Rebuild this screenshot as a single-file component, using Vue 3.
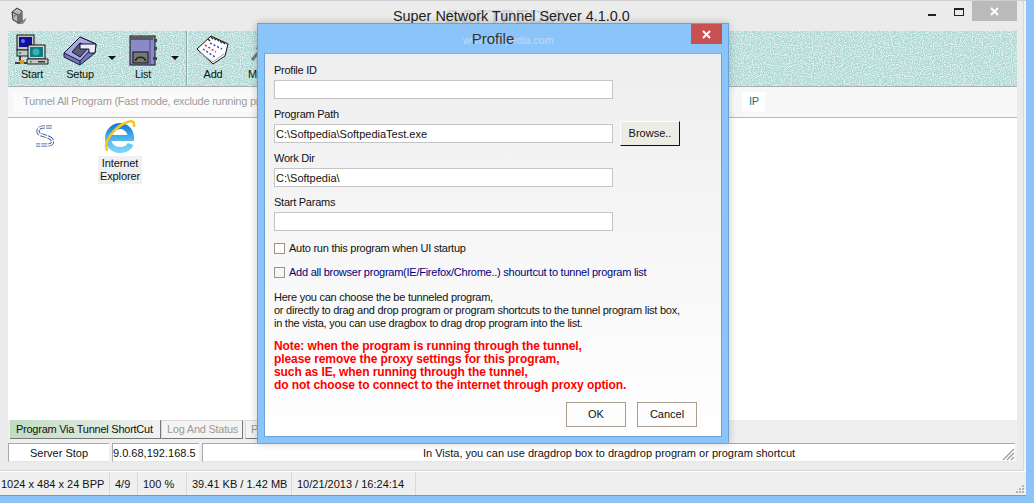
<script setup>
const fields = [
  { label: 'Profile ID', value: '' },
  { label: 'Program Path', value: 'C:\\Softpedia\\SoftpediaTest.exe', browse: true },
  { label: 'Work Dir', value: 'C:\\Softpedia\\' },
  { label: 'Start Params', value: '' },
]
const help = [
  'Here you can choose the be tunneled program,',
  'or directly to drag and drop program or program shortcuts to the tunnel program list box,',
  'in the vista, you can use dragbox to drag drop program into the list.',
]
const note = [
  'Note: when the program is running through the tunnel,',
  'please remove the proxy settings for this program,',
  'such as IE, when running through the tunnel,',
  'do not choose to connect to the internet through proxy option.',
]
</script>

<template>
  <div class="screen">
    <div class="win">
      <div class="frame">
        <header class="titlebar">
          <svg class="appicon" width="16" height="18" viewBox="0 0 16 18">
            <path d="M11 14l4-3v2l-3 4H5z" fill="#8c8c8c" />
            <path d="M1 5l5-4 5 3v10l-3 2-6-3z" fill="#b9b9b9" stroke="#333" stroke-width="1" />
            <path d="M1 5l6 3v8" fill="none" stroke="#333" stroke-width="1" />
            <path d="M7 8l4-3.600V14l-3 2z" fill="#6f6f6f" />
            <rect x="3" y="8" width="1.500" height="1.500" fill="#a040a0" />
          </svg>
          <span class="wm wm-big">SOFTPEDIA</span>
          <span class="title">Super Network Tunnel Server 4.1.0.0</span>
          <div class="controls">
            <i class="min"></i>
            <i class="max"></i>
            <span class="close">
              <svg width="9" height="9" viewBox="0 0 9 9"><path d="M1 1l7 7M8 1l-7 7" stroke="#fff" stroke-width="2" /></svg>
            </span>
          </div>
        </header>

        <div class="body">
          <div class="toolbar">
            <svg class="grain" width="100%" height="100%">
              <filter id="noise" x="0" y="0" width="100%" height="100%" color-interpolation-filters="sRGB">
                <feTurbulence type="fractalNoise" baseFrequency="1" numOctaves="1" seed="4" />
                <feColorMatrix values="0 0 0 0 0.55  0 0 0 0 0.78  0 0 0 0 0.76  5 0 0 0 -2.1" />
              </filter>
              <filter id="noise2" x="0" y="0" width="100%" height="100%" color-interpolation-filters="sRGB">
                <feTurbulence type="fractalNoise" baseFrequency="0.9" numOctaves="1" seed="11" />
                <feColorMatrix values="0 0 0 0 0.88  0 0 0 0 0.95  0 0 0 0 0.94  5 0 0 0 -2.2" />
              </filter>
              <rect width="100%" height="100%" filter="url(#noise)" />
              <rect width="100%" height="100%" filter="url(#noise2)" />
            </svg>

            <div class="tool">
              <svg width="34" height="32" viewBox="0 0 34 32">
                <rect x="2" y="1" width="17" height="15" fill="#c6c6c6" stroke="#111" />
                <rect x="4" y="3" width="13" height="10" fill="#10109a" />
                <circle cx="8" cy="7" r="2" fill="#6a6aff" />
                <rect x="2" y="16" width="14" height="6" fill="#c6c6c6" stroke="#222" />
                <rect x="4" y="18" width="2" height="2" fill="#1faa4a" />
                <path d="M5 22v5M0 29h12" stroke="#111" stroke-width="1.500" />
                <rect x="5" y="26" width="4" height="4" fill="#e8921a" />
                <rect x="13" y="11" width="17" height="14" fill="#d4d4d4" stroke="#111" />
                <rect x="15" y="13" width="13" height="10" fill="#0c7c86" />
                <circle cx="21" cy="18" r="3.500" fill="#38b0b0" />
                <path d="M12 25h18l3 0v5H12z" fill="#c6c6c6" stroke="#222" />
                <rect x="15" y="27" width="2" height="1.500" fill="#1faa4a" />
                <rect x="23" y="27" width="7" height="1.500" fill="#333" />
              </svg>
              <span>Start</span>
            </div>

            <div class="tool">
              <svg width="34" height="32" viewBox="0 0 34 32">
                <path d="M1 19L17 3l16 7-1 9-15 12-16-8z" fill="#7676b8" stroke="#15153a" stroke-linejoin="round" />
                <path d="M1 19L17 3l16 7-16 17z" fill="#a9a9e0" stroke="#15153a" stroke-linejoin="round" />
                <path d="M9 18l8-9 9 4-9 10z" fill="#5c5c78" stroke="#15153a" />
                <path d="M17 27v4" stroke="#15153a" />
                <path d="M17 10h16l-1 9h-6v-4h-9z" fill="#ecedf6" stroke="#15153a" stroke-linejoin="round" />
              </svg>
              <span>Setup</span>
            </div>

            <div class="caret"><i></i></div>

            <div class="tool">
              <svg width="34" height="32" viewBox="0 0 34 32">
                <rect x="4" y="2" width="25" height="29" fill="#8a8ac8" stroke="#111" />
                <rect x="5" y="2" width="22" height="4" fill="#5a5a5a" />
                <path d="M24 6v24" stroke="#4a4a80" />
                <rect x="28" y="5" width="3" height="3" fill="#444" />
                <rect x="28" y="13" width="3" height="3" fill="#444" />
                <rect x="27" y="23" width="4" height="3" fill="#444" />
                <rect x="7" y="18" width="15" height="11" fill="#777" stroke="#111" />
                <path d="M9.500 27c1-5 9-5 10 0" fill="none" stroke="#222" stroke-width="1.500" />
              </svg>
              <span>List</span>
            </div>

            <div class="caret"><i></i></div>

            <div class="sep"></div>

            <div class="tool">
              <svg width="34" height="32" viewBox="0 0 34 32">
                <path d="M1 15L15 2l17 8-3 12-12 8z" fill="#fff" stroke="#111" stroke-linejoin="round" />
                <path d="M3 18l14 10 11-8" fill="none" stroke="#999" />
                <path d="M12 5l2 2M15 3l2 2M18 4l2 2M21 5l2 2M24 7l2 2M27 8l2 2" stroke="#333" stroke-width="1.500" />
                <path d="M9 11l11 7" stroke="#d03030" stroke-width="1.500" stroke-dasharray="2 2" />
                <path d="M7 15l12 8" stroke="#2a4ad0" stroke-width="1.500" stroke-dasharray="2 2" />
                <path d="M14 9l12 6" stroke="#2a4ad0" stroke-width="1.500" stroke-dasharray="2 2" />
              </svg>
              <span>Add</span>
            </div>

            <div class="tool">
              <svg width="34" height="32" viewBox="0 0 34 32">
                <path d="M8 26l6-7M14 14l9-8 4 3-7 9z" fill="#6c6c6c" stroke="#777" stroke-width="3" />
              </svg>
              <span>Move</span>
            </div>
          </div>

          <div class="modebar">
            <span class="modetab">Tunnel All Program (Fast mode, exclude running program)</span>
            <span class="iptab">IP</span>
          </div>

          <div class="list">
            <div class="entry">
              <svg class="slogo" width="32" height="32" viewBox="0 0 32 32">
                <g fill="none" stroke-linejoin="round">
                  <path d="M23 6H14C8 6 7 13 13 14l6 2c6 2 6 8 0 8H7" stroke="#2a4a8c" stroke-width="3.200" stroke-dasharray="6 1" />
                  <path d="M23 6H14C8 6 7 13 13 14l6 2c6 2 6 8 0 8H7" stroke="#fff" stroke-width="1.500" />
                </g>
              </svg>
            </div>
            <div class="entry">
              <svg width="32" height="34" viewBox="0 0 32 34">
                <defs>
                  <linearGradient id="ie" x1="0" y1="0" x2="0" y2="1">
                    <stop offset="0" stop-color="#1f7fd8" />
                    <stop offset="0.55" stop-color="#4fb7ee" />
                    <stop offset="1" stop-color="#7ad3f5" />
                  </linearGradient>
                </defs>
                <path d="M6 18h21c0-7-5-12-11-12S4 11 4 18s5 12 12 12c5 0 9-2 10.500-6" fill="none" stroke="url(#ie)" stroke-width="6" />
                <path d="M3 30C-1 22 10 8 21 3c6-3 10-2 9 3" fill="none" stroke="#f5c520" stroke-width="2.500" stroke-linecap="round" />
              </svg>
              <span class="entry-label">Internet<br />Explorer</span>
            </div>
          </div>

          <div class="tabs">
            <span class="tab active">Program Via Tunnel ShortCut</span>
            <span class="tab second">Log And Status</span>
            <span class="tab">Proxy</span>
          </div>

          <div class="strip">
            <div class="cell c1">Server Stop</div>
            <div class="cell c2">9.0.68,192.168.5</div>
            <div class="cell c3">In Vista, you can use dragdrop box to dragdrop program or program shortcut
              <svg class="grip" width="14" height="14" viewBox="0 0 14 14">
                <path d="M13 2L2 13M13 6L6 13M13 10L10 13" stroke="#9a9a9a" stroke-width="1.300" />
              </svg>
            </div>
          </div>
        </div>
      </div>

      <footer class="statusbar">
        <span class="s s1">1024 x 484 x 24 BPP</span>
        <span class="s s2">4/9</span>
        <span class="s s3">100 %</span>
        <span class="s s4">39.41 KB / 1.42 MB</span>
        <span class="s s5">10/21/2013 / 16:24:14</span>
        <svg class="dots" width="10" height="10" viewBox="0 0 10 10">
          <path d="M7 1h2v2H7zM4 4h2v2H4zM7 4h2v2H7zM1 7h2v2H1zM4 7h2v2H4zM7 7h2v2H7z" fill="#b4b4b4" />
        </svg>
      </footer>
    </div>

    <section class="dialog">
      <div class="dlg-head">
        <span class="wm wm-small">www.softpedia.com</span>
        <span class="dlg-title">Profile</span>
        <span class="dlg-close">
          <svg width="9" height="9" viewBox="0 0 9 9"><path d="M1 1l7 7M8 1l-7 7" stroke="#fff" stroke-width="2" /></svg>
        </span>
      </div>
      <div class="client">
        <div v-for="f in fields" :key="f.label" class="field">
          <label>{{ f.label }}</label>
          <div class="row">
            <input class="input" :value="f.value" readonly />
            <button v-if="f.browse" class="browse">Browse..</button>
          </div>
        </div>

        <div class="check first"><i></i><span>Auto run this program when UI startup</span></div>
        <div class="check second"><i></i><span class="navy">Add all browser program(IE/Firefox/Chrome..) shourtcut to tunnel program list</span></div>

        <p class="help"><span v-for="l in help" :key="l">{{ l }}</span></p>
        <p class="note"><span v-for="l in note" :key="l">{{ l }}</span></p>

        <div class="actions">
          <button class="action">OK</button>
          <button class="action">Cancel</button>
        </div>
      </div>
    </section>
  </div>
</template>

<style>
html, body { margin: 0; overflow: hidden; }
</style>

<style scoped>
.screen {
  position: relative;
  width: 1034px;
  height: 503px;
  overflow: hidden;
  background: #8ac4f8;
  font-family: "Liberation Sans", Arial, sans-serif;
  font-size: 11px;
  line-height: 13px;
  letter-spacing: -0.25px;
  color: #111;
}
.win {
  width: 1026px;
  height: 496px;
  box-sizing: border-box;
  display: flex;
  flex-direction: column;
  background: #f2f2f2;
  border-top: 1px solid #cfcfcf;
  border-bottom: 1px solid #6e9cc8;
}
.frame {
  flex: 1;
  min-height: 0;
  margin-right: 2px;
  display: flex;
  flex-direction: column;
  background: #ebebeb;
  border-right: 1px solid #d8d8d8;
  border-bottom: 1px solid #d4d4d4;
}
.titlebar {
  position: relative;
  height: 30px;
  flex: none;
  display: flex;
  align-items: flex-start;
}
.appicon { margin: 6px 0 0 11px; }
.title {
  position: absolute;
  left: 393px;
  top: 5px;
  font-size: 14.400px;
  letter-spacing: 0;
  line-height: 20px;
  color: #222;
  white-space: nowrap;
}
.wm {
  position: absolute;
  color: rgba(150, 150, 160, 0.28);
  white-space: nowrap;
  letter-spacing: 0;
}
.wm-big { left: 445px; top: 6px; font-size: 21px; line-height: 20px; font-weight: 700; }
.wm-small { left: 199px; top: 10px; font-size: 10.500px; color: rgba(235, 240, 248, 0.55); }
.controls {
  position: absolute;
  right: 6px;
  top: 0;
  display: flex;
  align-items: flex-start;
}
.min { width: 8px; height: 2px; background: #222; margin: 13px 18px 0 0; }
.max { width: 8px; height: 5px; border: 1px solid #222; border-top-width: 2px; margin: 7px 8px 0 0; }
.close {
  width: 45px;
  height: 20px;
  background: #bababa;
  display: flex;
  align-items: center;
  justify-content: center;
}
.body {
  flex: 1;
  min-height: 0;
  margin: 0 6px 8px 8px;
  display: flex;
  flex-direction: column;
}
.toolbar {
  position: relative;
  height: 56px;
  flex: none;
  display: flex;
  background: #c6e1e0;
  border-bottom: 1px solid #a9aeae;
  box-sizing: border-box;
  overflow: hidden;
}
.grain { position: absolute; left: 0; top: 0; }
.tool {
  position: relative;
  width: 48px;
  flex: none;
  display: flex;
  flex-direction: column;
  align-items: center;
  padding-top: 3px;
}
.tool span { margin-top: 1px; line-height: 14px; }
.caret {
  position: relative;
  width: 15px;
  flex: none;
  display: flex;
  justify-content: center;
  padding-top: 25px;
  box-sizing: border-box;
}
.caret i {
  width: 0;
  height: 0;
  border: 4px solid transparent;
  border-top: 4px solid #111;
  border-bottom: 0;
}
.sep {
  position: relative;
  flex: none;
  width: 2px;
  margin: 0 1px 0 4px;
  background: #e6f1f0;
  border-left: 1px solid #96a9a8;
  box-sizing: border-box;
}
.modebar {
  height: 31px;
  flex: none;
  box-sizing: border-box;
  padding: 5px 0 0 5px;
  display: flex;
  background: #f7f7f7;
  border-bottom: 1px solid #b8b8b8;
}
.modetab {
  width: 723px;
  height: 20px;
  box-sizing: border-box;
  padding: 3px 0 0 10px;
  background: #fbfbfb;
  color: #9c9c9c;
  white-space: nowrap;
  overflow: hidden;
}
.iptab {
  width: 23px;
  height: 20px;
  margin-left: 6px;
  box-sizing: border-box;
  padding: 3px 0 0 7px;
  background: #fff;
  color: #008080;
}
.list {
  flex: 1;
  min-height: 0;
  background: #fff;
  display: flex;
  padding: 2px 0 0 0;
  gap: 31px;
}
.entry {
  width: 44px;
  flex: none;
  display: flex;
  flex-direction: column;
  align-items: center;
}
.entry:first-child { margin-left: 15px; }
.slogo { margin-top: 1px; }
.entry-label {
  margin-top: 2px;
  padding: 1px 2px;
  background: #f0f0f0;
  text-align: center;
  white-space: nowrap;
  letter-spacing: -0.1px;
}
.tabs {
  height: 23px;
  flex: none;
  box-sizing: border-box;
  padding-left: 2px;
  display: flex;
  background: #efefef;
  align-items: flex-start;
  overflow: hidden;
}
.tab {
  height: 19px;
  box-sizing: border-box;
  padding: 2px 5px 0 5px;
  margin-right: 2px;
  color: #9a9a9a;
  white-space: nowrap;
  background: #f4f4f4;
  border: 1px solid #d8d8d8;
  border-right: 1px solid #777;
  border-bottom: 1px solid #777;
}
.tab.second { width: 82px; }
.tab.active {
  width: 151px;
  padding: 3px 0 0 6px;
  margin-right: 0;
  color: #111;
  background: linear-gradient(90deg, #bfdcc0, #f2f2f2);
  border: none;
  border-bottom: 1px solid #777;
  border-right: 1px solid #777;
}
.strip {
  height: 19px;
  flex: none;
  display: flex;
  gap: 3px;
  background: #efefef;
  letter-spacing: 0;
}
.cell {
  position: relative;
  box-sizing: border-box;
  height: 19px;
  background: #fff;
  border-top: 1px solid #a8a8a8;
  border-left: 1px solid #a8a8a8;
  border-bottom: 1px solid #e6e6e6;
  padding-top: 3px;
  white-space: nowrap;
  overflow: hidden;
  text-align: center;
}
.c1 { width: 101px; }
.c2 { width: 87px; text-align: left; }
.c3 { flex: 1; margin-right: 2px; }
.grip { position: absolute; right: 0; bottom: 0; }
.statusbar {
  height: 24px;
  flex: none;
  position: relative;
  display: flex;
  align-items: center;
  background: #efefef;
  border-top: 1px solid #fff;
  box-sizing: border-box;
  letter-spacing: 0;
}
.s {
  height: 100%;
  box-sizing: border-box;
  padding: 6px 0 0 5px;
  border-right: 1px solid #d9d9d9;
  white-space: nowrap;
}
.s1 { width: 110px; padding-left: 1px; }
.s2 { width: 28px; }
.s3 { width: 49px; }
.s4 { width: 105px; }
.s5 { width: 124px; }
.dots { position: absolute; right: 1px; bottom: 1px; }
.dialog {
  position: absolute;
  left: 257px;
  top: 23px;
  width: 472px;
  height: 420px;
  box-sizing: border-box;
  padding: 0 6px 5px 6px;
  display: flex;
  flex-direction: column;
  background: #8ac4f8;
  border: 1px solid #6aa2d8;
  border-bottom-color: #8ac4f8;
  box-shadow: 0 0 8px rgba(0, 0, 0, 0.22);
}
.dlg-head {
  position: relative;
  height: 29px;
  flex: none;
  text-align: center;
}
.dlg-title {
  position: relative;
  display: block;
  font-size: 15px;
  letter-spacing: 0;
  line-height: 30px;
  color: #333;
}
.dlg-close {
  position: absolute;
  right: 0;
  top: 0;
  width: 31px;
  height: 20px;
  background: #c75050;
  display: flex;
  align-items: center;
  justify-content: center;
}
.client {
  flex: 1;
  min-height: 0;
  box-sizing: border-box;
  padding: 1px 0 0 9px;
  display: flex;
  flex-direction: column;
  background: linear-gradient(180deg, #eeeeee, #ffffff);
  border: 1px solid #6aa2d8;
  border-top-color: #7fb3e2;
}
.field label {
  display: block;
  height: 25px;
  box-sizing: border-box;
  padding-top: 9px;
}
.row {
  height: 19px;
  display: flex;
  align-items: center;
  gap: 7px;
}
.input {
  width: 339px;
  height: 19px;
  box-sizing: border-box;
  padding: 1px 0 0 1px;
  border: 1px solid #c4c4c4;
  background: #fff;
  font: inherit;
  letter-spacing: 0;
  color: #111;
  outline: none;
  flex: none;
}
.browse {
  width: 60px;
  height: 25px;
  box-sizing: border-box;
  padding: 0;
  background: #ecebe4;
  border: 1px solid #111;
  border-top-color: #fff;
  border-left-color: #fff;
  font: inherit;
  color: #111;
}
.check {
  display: flex;
  align-items: center;
  gap: 4px;
  height: 13px;
}
.check i {
  box-sizing: content-box;
  width: 9px;
  height: 9px;
  border: 1px solid #9c9384;
  background: #fff;
  flex: none;
}
.check.first { margin-top: 11px; }
.check.second { margin-top: 11px; }
.check.second i { background: #f6f6f6; }
.navy { color: #000080; }
.help, .note {
  margin: 0;
  display: flex;
  flex-direction: column;
  white-space: nowrap;
}
.help { margin-top: 12px; }
.note {
  margin-top: 10px;
  color: #ff0000;
  font-size: 12px;
  letter-spacing: -0.08px;
  font-weight: 700;
}
.actions {
  display: flex;
  gap: 11px;
  margin: 10px 0 0 292px;
}
.action {
  width: 60px;
  height: 25px;
  box-sizing: border-box;
  padding: 0;
  background: #fdfdfd;
  border: 1px solid #a89f91;
  font: inherit;
  letter-spacing: 0;
  color: #111;
}
</style>
